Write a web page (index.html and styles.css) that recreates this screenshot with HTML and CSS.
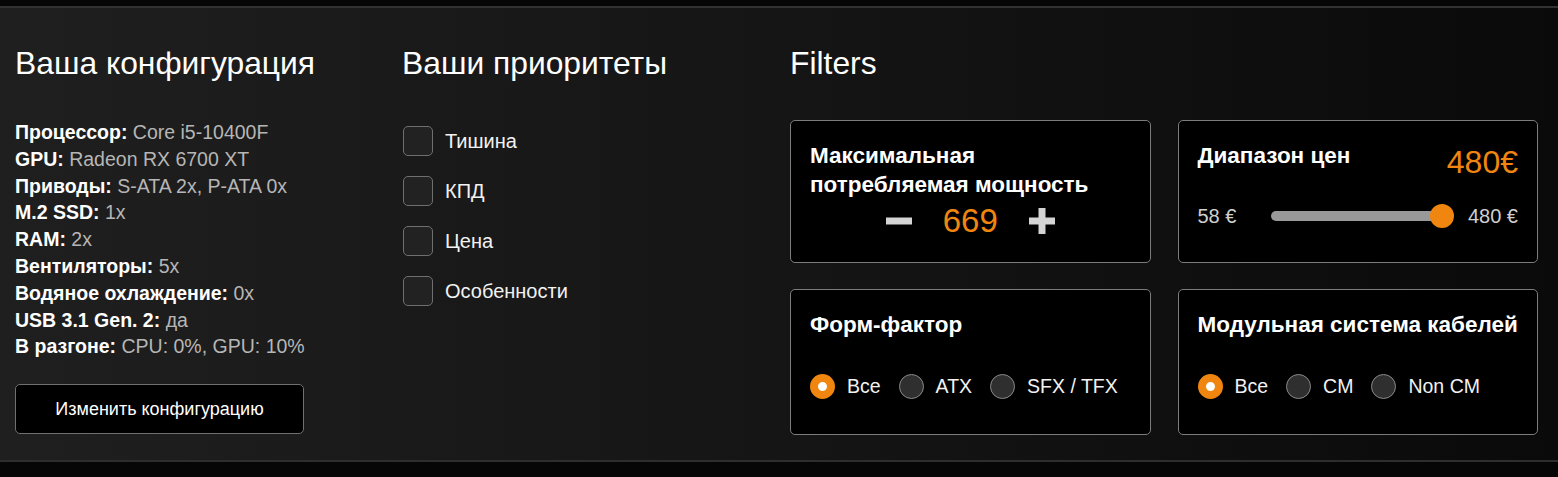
FILE: index.html
```html
<!DOCTYPE html>
<html lang="ru">
<head>
<meta charset="utf-8">
<link rel="stylesheet" href="styles.css">
</head>
<body>
<section class="panel">
  <div class="col">
    <h2 class="heading">Ваша конфигурация</h2>
    <ul class="config">
      <li><b>Процессор:</b> Core i5-10400F</li>
      <li><b>GPU:</b> Radeon RX 6700 XT</li>
      <li><b>Приводы:</b> S-ATA 2x, P-ATA 0x</li>
      <li><b>M.2 SSD:</b> 1x</li>
      <li><b>RAM:</b> 2x</li>
      <li><b>Вентиляторы:</b> 5x</li>
      <li><b>Водяное охлаждение:</b> 0x</li>
      <li><b>USB 3.1 Gen. 2:</b> да</li>
      <li><b>В разгоне:</b> CPU: 0%, GPU: 10%</li>
    </ul>
    <button class="btn">Изменить конфигурацию</button>
  </div>
  <div class="col">
    <h2 class="heading">Ваши приоритеты</h2>
    <ul class="prio">
      <li><span class="check"></span>Тишина</li>
      <li><span class="check"></span>КПД</li>
      <li><span class="check"></span>Цена</li>
      <li><span class="check"></span>Особенности</li>
    </ul>
  </div>
  <div class="col col-filters">
    <h2 class="heading">Filters</h2>
    <div class="cards">
      <div class="card card-power">
        <div class="card-title">Максимальная<br>потребляемая мощность</div>
        <div class="stepper">
          <span class="step-btn">
            <svg width="26" height="8" viewBox="0 0 26 8"><rect x="0" y="0.5" width="26" height="7" fill="#d4d4d4"/></svg>
          </span>
          <span class="step-val">669</span>
          <span class="step-btn">
            <svg width="26" height="26" viewBox="0 0 26 26"><rect x="0" y="9.5" width="26" height="7" fill="#d4d4d4"/><rect x="9.5" y="0" width="7" height="26" fill="#d4d4d4"/></svg>
          </span>
        </div>
      </div>
      <div class="card card-price">
        <div class="price-head">
          <div class="card-title">Диапазон цен</div>
          <div class="price-val">480€</div>
        </div>
        <div class="slider-row">
          <span class="range-lbl">58 €</span>
          <div class="track"><span class="thumb"></span></div>
          <span class="range-lbl">480 €</span>
        </div>
      </div>
      <div class="card card-radio">
        <div class="card-title">Форм-фактор</div>
        <div class="radios">
          <label class="radio"><span class="dot on"></span>Все</label>
          <label class="radio"><span class="dot"></span>ATX</label>
          <label class="radio"><span class="dot"></span>SFX / TFX</label>
        </div>
      </div>
      <div class="card card-radio">
        <div class="card-title">Модульная система кабелей</div>
        <div class="radios">
          <label class="radio"><span class="dot on"></span>Все</label>
          <label class="radio"><span class="dot"></span>CM</label>
          <label class="radio"><span class="dot"></span>Non CM</label>
        </div>
      </div>
    </div>
  </div>
</section>
</body>
</html>
```
FILE: styles.css
```css
* { box-sizing: border-box; }
html, body { margin: 0; padding: 0; }
body {
  background: #060606;
  font-family: "Liberation Sans", Arial, sans-serif;
  color: #fff;
  padding-top: 6px;
}
.panel {
  display: grid;
  grid-template-columns: 387px 388px 1fr;
  padding: 37px 20px 0 15px;
  background: linear-gradient(90deg, #1f1f1f 0%, #151515 50%, #0a0a0a 100%);
  border-top: 2px solid #323232;
  border-bottom: 2px solid #2e2e2e;
  height: 456px;
}
.heading {
  margin: 0;
  font-weight: normal;
  font-size: 31.8px;
  line-height: 36px;
  color: #fff;
}
.config {
  list-style: none;
  margin: 38px 0 0;
  padding: 0;
  font-size: 19.5px;
  line-height: 26.8px;
  color: #b6b6b6;
}
.config b { color: #fff; }
.btn {
  display: block;
  margin-top: 24px;
  width: 289px;
  height: 50px;
  background: #000;
  border: 1px solid #707070;
  border-radius: 5px;
  color: #fff;
  font-family: inherit;
  font-size: 18px;
  cursor: pointer;
}
.prio {
  list-style: none;
  margin: 35px 0 0;
  padding: 0;
}
.prio li {
  display: flex;
  align-items: center;
  gap: 12px;
  height: 50px;
  font-size: 20px;
  color: #f2f2f2;
  padding-left: 1px;
}
.check {
  width: 30px;
  height: 30px;
  border: 1px solid #6f6f6f;
  border-radius: 5px;
  background: #222;
}
.cards {
  margin-top: 39px;
  display: grid;
  grid-template-columns: 1fr 1fr;
  column-gap: 27px;
  row-gap: 26px;
}
.card {
  background: #000;
  border: 1px solid #7c7c7c;
  border-radius: 5px;
  padding: 20px 19px 0;
}
.card-power, .card-price { height: 143px; }
.card-radio { height: 146px; }
.card-title {
  font-weight: bold;
  font-size: 22.5px;
  line-height: 29px;
  color: #fff;
}
.stepper {
  display: flex;
  justify-content: center;
  align-items: center;
  gap: 31px;
  margin-top: 4px;
  height: 36px;
}
.step-btn { display: flex; align-items: center; }
.step-val {
  color: #f0860f;
  font-size: 33px;
  line-height: 36px;
}
.price-head {
  display: flex;
  justify-content: space-between;
  align-items: flex-start;
}
.price-val {
  color: #f0860f;
  font-size: 32px;
  line-height: 36px;
  margin-top: 3px;
}
.slider-row {
  display: flex;
  align-items: center;
  height: 24px;
  margin-top: 24px;
}
.range-lbl {
  font-size: 20px;
  color: #d0d0d0;
}
.track {
  position: relative;
  flex: 1;
  height: 10px;
  margin: 0 26px 0 35px;
  background: #999;
  border-radius: 5px;
}
.thumb {
  position: absolute;
  right: -12px;
  top: -7px;
  width: 24px;
  height: 24px;
  border-radius: 50%;
  background: #f0860f;
}
.radios {
  display: flex;
  align-items: center;
  gap: 18px;
  margin-top: 35px;
  height: 25px;
}
.radio {
  display: flex;
  align-items: center;
  gap: 12px;
  font-size: 19.5px;
  color: #f2f2f2;
}
.dot {
  width: 25px;
  height: 25px;
  border-radius: 50%;
  background: #2f2f2f;
  border: 1px solid #8a8a8a;
}
.dot.on {
  border: 8px solid #f0860f;
  background: #fff;
}
```
